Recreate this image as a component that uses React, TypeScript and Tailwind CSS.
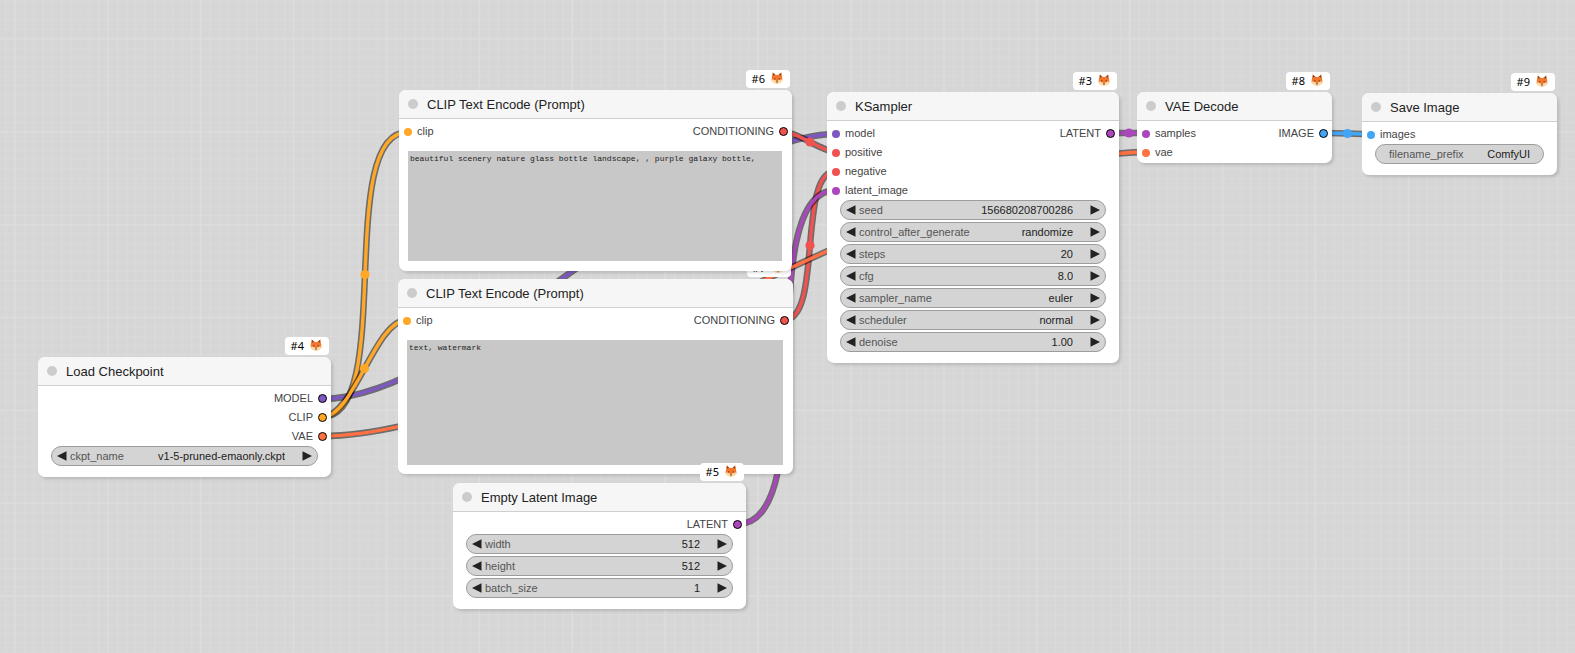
import { ReactNode, useId } from "react";

const COLORS = {
  model: "#7e57c2",
  clip: "#ffa726",
  vae: "#ff7043",
  latent: "#ab47bc",
  cond: "#ef5350",
  image: "#42a5f5",
};

type Kind = keyof typeof COLORS;

const DOTS: Record<Kind, string> = {
  model: "bg-[#7e57c2]",
  clip: "bg-[#ffa726]",
  vae: "bg-[#ff7043]",
  latent: "bg-[#ab47bc]",
  cond: "bg-[#ef5350]",
  image: "bg-[#42a5f5]",
};

type Slot = { name: string; kind: Kind };

type Link = { from: [number, number]; to: [number, number]; kind: Kind };

const LINKS: Link[] = [
  { from: [322, 399], to: [836, 134], kind: "model" },
  { from: [784, 132], to: [836, 152], kind: "cond" },
  { from: [784, 320], to: [836, 171], kind: "cond" },
  { from: [738, 524], to: [836, 190], kind: "latent" },
  { from: [322, 417], to: [408, 132], kind: "clip" },
  { from: [322, 417], to: [407, 320], kind: "clip" },
  { from: [1111, 133], to: [1147, 133], kind: "latent" },
  { from: [322, 436], to: [1147, 152], kind: "vae" },
  { from: [1324, 133], to: [1371, 134], kind: "image" },
];

function Links() {
  return (
    <svg className="pointer-events-none absolute inset-0 h-full w-full" fill="none" aria-hidden="true">
      {LINKS.map(({ from: [x1, y1], to: [x2, y2], kind }, i) => {
        const bend = Math.hypot(x2 - x1, y2 - y1) * 0.25;
        const d = `M${x1} ${y1}C${x1 + bend} ${y1} ${x2 - bend} ${y2} ${x2} ${y2}`;
        return (
          <g key={i}>
            <path d={d} stroke="#000" strokeOpacity="0.5" strokeWidth="6.5" />
            <path d={d} stroke={COLORS[kind]} strokeWidth="3.4" />
            <circle cx={(x1 + x2) / 2} cy={(y1 + y2) / 2} r="4.6" fill={COLORS[kind]} />
          </g>
        );
      })}
    </svg>
  );
}

function Grid() {
  return (
    <svg className="pointer-events-none absolute inset-0 h-full w-full" aria-hidden="true">
      <defs>
        <pattern id="minor" x="14.5" y="38.5" width="9.29" height="9.29" patternUnits="userSpaceOnUse">
          <path d="M0.5 0V9.29M0 0.5H9.29" stroke="#dadada" strokeWidth="1" />
        </pattern>
        <pattern id="major" x="13.8" y="37.8" width="92.9" height="92.9" patternUnits="userSpaceOnUse">
          <path d="M1 0V92.9M0 1H92.9" stroke="#dddddd" strokeWidth="1.6" />
        </pattern>
      </defs>
      <rect width="100%" height="100%" fill="url(#minor)" />
      <rect width="100%" height="100%" fill="url(#major)" />
    </svg>
  );
}

function Fox() {
  return (
    <svg viewBox="0 0 22 22" className="size-[12px]" aria-hidden="true">
      <path d="M1.500 10 3 0.500 9 5.500h4L19 0.500 20.500 10l0.500 5-4 4-6 2.500L5 19l-4-4z" fill="#f4772e" />
      <path d="M3.800 2 7 5 4.300 7zM18.200 2 15 5l2.700 2z" fill="#4a3a35" />
      <path d="M0.500 14c3.500-1 7.500 0 10.500 4 3-4 7-5 10.500-4-1 4.500-5 7.500-10.500 7.500S1.500 18.500 0.500 14z" fill="#fbd9a5" />
      <circle cx="7" cy="12.500" r="1.100" fill="#3b2a25" />
      <circle cx="15" cy="12.500" r="1.100" fill="#3b2a25" />
      <path d="M9.200 17.500h3.600L11 20z" fill="#3b2a25" />
    </svg>
  );
}

function Node({
  id,
  title,
  place,
  pad = "pb-[11px]",
  inputs = [],
  outputs = [],
  children,
}: {
  id: number;
  title: string;
  place: string;
  pad?: string;
  inputs?: Slot[];
  outputs?: Slot[];
  children?: ReactNode;
}) {
  return (
    <section className={`absolute ${place}`}>
      <div className="absolute right-[2px] bottom-full mb-[2px] flex h-[18px] items-center gap-[6px] rounded-[4px] bg-white pr-[7px] pb-[2px] pl-[6px] font-['Noto_Sans',sans-serif] text-[11px] leading-none text-black">
        <span>#{id}</span>
        <Fox />
      </div>
      <div className="relative overflow-hidden rounded-[7px] bg-white shadow-[2px_2px_3px_rgba(0,0,0,0.14)]">
        <header className="flex h-[29px] items-center gap-[9px] border-b border-[#cfcfcf] bg-[#f6f6f6] pl-[9px]">
          <span className="size-[10px] rounded-full bg-[#cccccc]" />
          <h2 className="text-[13px] leading-none text-[#222]">{title}</h2>
        </header>
        <div className={`pt-[3px] ${pad}`}>
          <div className="flex justify-between text-[11px] text-[#444]">
            <ul className="pl-[5px]">
              {inputs.map((s) => (
                <li key={s.name} className="flex h-[19px] items-center gap-[5px]">
                  <span className={`size-[8px] rounded-full ${DOTS[s.kind]}`} />
                  {s.name}
                </li>
              ))}
            </ul>
            <ul className="pr-[4px]">
              {outputs.map((s) => (
                <li key={s.name} className="flex h-[19px] items-center justify-end gap-[5px]">
                  {s.name}
                  <span className={`size-[9px] rounded-full border border-black ${DOTS[s.kind]}`} />
                </li>
              ))}
            </ul>
          </div>
          {children}
        </div>
      </div>
    </section>
  );
}

function Widgets({ children }: { children: ReactNode }) {
  return <div className="mx-[13px] flex flex-col gap-[2px]">{children}</div>;
}

const PILL =
  "flex h-[20px] items-center rounded-full border border-[#9c9c9c] bg-[#d4d4d4] text-[11px] leading-none";

function Arrow({ dir, name }: { dir: "left" | "right"; name: string }) {
  return (
    <button type="button" aria-label={`${name} ${dir === "left" ? "previous" : "next"}`} className="flex shrink-0">
      <svg viewBox="0 0 10 10" className="size-[10px]" fill="#222" aria-hidden="true">
        {dir === "left" ? <path d="M0 5 9.500 0.300V9.700z" /> : <path d="M10 5 0.500 0.300V9.700z" />}
      </svg>
    </button>
  );
}

function Stepper({ name, value, combo = false }: { name: string; value: string; combo?: boolean }) {
  const id = useId();
  return (
    <div className={`${PILL} px-[5px]`}>
      <Arrow dir="left" name={name} />
      <label htmlFor={id} className="ml-[3px] shrink-0 text-[#555]">
        {name}
      </label>
      {combo ? (
        <select
          id={id}
          defaultValue={value}
          className="mr-[17px] h-[16px] min-w-0 flex-1 appearance-none bg-transparent text-right text-[#222] outline-none [text-align-last:right]"
        >
          <option>{value}</option>
        </select>
      ) : (
        <input
          id={id}
          type="text"
          inputMode="decimal"
          defaultValue={value}
          className="mr-[17px] h-[16px] min-w-0 flex-1 bg-transparent text-right text-[#222] outline-none"
        />
      )}
      <Arrow dir="right" name={name} />
    </div>
  );
}

function TextWidget({ name, value }: { name: string; value: string }) {
  const id = useId();
  return (
    <div className={`${PILL} px-[13px]`}>
      <label htmlFor={id} className="shrink-0 text-[#555]">
        {name}
      </label>
      <input
        id={id}
        type="text"
        defaultValue={value}
        className="h-[16px] min-w-0 flex-1 bg-transparent text-right text-[#222] outline-none"
      />
    </div>
  );
}

function Prompt({ value, size }: { value: string; size: string }) {
  return (
    <div className="mt-[10px] flex pr-[10px] pl-[9px]">
      <textarea
        aria-label="Prompt"
        spellCheck={false}
        defaultValue={value}
        className={`w-full resize-none bg-[#c8c8c8] p-[2px] font-['Liberation_Mono',monospace] text-[8px] leading-[11px] text-[#222] outline-none ${size}`}
      />
    </div>
  );
}

export default function App() {
  return (
    <main className="relative min-h-screen w-full overflow-hidden bg-[#d6d6d6] font-['Liberation_Sans',Arial,sans-serif]">
      <Grid />
      <Links />

      <Node
        id={7}
        title="CLIP Text Encode (Prompt)"
        place="left-[398px] top-[279px] w-[395px]"
        pad="pb-[9px]"
        inputs={[{ name: "clip", kind: "clip" }]}
        outputs={[{ name: "CONDITIONING", kind: "cond" }]}
      >
        <Prompt value="text, watermark" size="h-[125px]" />
      </Node>

      <Node
        id={6}
        title="CLIP Text Encode (Prompt)"
        place="left-[399px] top-[90px] w-[393px]"
        pad="pb-[10px]"
        inputs={[{ name: "clip", kind: "clip" }]}
        outputs={[{ name: "CONDITIONING", kind: "cond" }]}
      >
        <Prompt
          value="beautiful scenery nature glass bottle landscape, , purple galaxy bottle,"
          size="h-[110px]"
        />
      </Node>

      <Node
        id={5}
        title="Empty Latent Image"
        place="left-[453px] top-[483px] w-[293px]"
        outputs={[{ name: "LATENT", kind: "latent" }]}
      >
        <Widgets>
          <Stepper name="width" value="512" />
          <Stepper name="height" value="512" />
          <Stepper name="batch_size" value="1" />
        </Widgets>
      </Node>

      <Node
        id={4}
        title="Load Checkpoint"
        place="left-[38px] top-[357px] w-[293px]"
        outputs={[
          { name: "MODEL", kind: "model" },
          { name: "CLIP", kind: "clip" },
          { name: "VAE", kind: "vae" },
        ]}
      >
        <Widgets>
          <Stepper name="ckpt_name" value="v1-5-pruned-emaonly.ckpt" combo />
        </Widgets>
      </Node>

      <Node
        id={3}
        title="KSampler"
        place="left-[827px] top-[92px] w-[292px]"
        inputs={[
          { name: "model", kind: "model" },
          { name: "positive", kind: "cond" },
          { name: "negative", kind: "cond" },
          { name: "latent_image", kind: "latent" },
        ]}
        outputs={[{ name: "LATENT", kind: "latent" }]}
      >
        <Widgets>
          <Stepper name="seed" value="156680208700286" />
          <Stepper name="control_after_generate" value="randomize" combo />
          <Stepper name="steps" value="20" />
          <Stepper name="cfg" value="8.0" />
          <Stepper name="sampler_name" value="euler" combo />
          <Stepper name="scheduler" value="normal" combo />
          <Stepper name="denoise" value="1.00" />
        </Widgets>
      </Node>

      <Node
        id={8}
        title="VAE Decode"
        place="left-[1137px] top-[92px] w-[195px]"
        pad="pb-px"
        inputs={[
          { name: "samples", kind: "latent" },
          { name: "vae", kind: "vae" },
        ]}
        outputs={[{ name: "IMAGE", kind: "image" }]}
      />

      <Node
        id={9}
        title="Save Image"
        place="left-[1362px] top-[93px] w-[195px]"
        inputs={[{ name: "images", kind: "image" }]}
      >
        <Widgets>
          <TextWidget name="filename_prefix" value="ComfyUI" />
        </Widgets>
      </Node>
    </main>
  );
}
